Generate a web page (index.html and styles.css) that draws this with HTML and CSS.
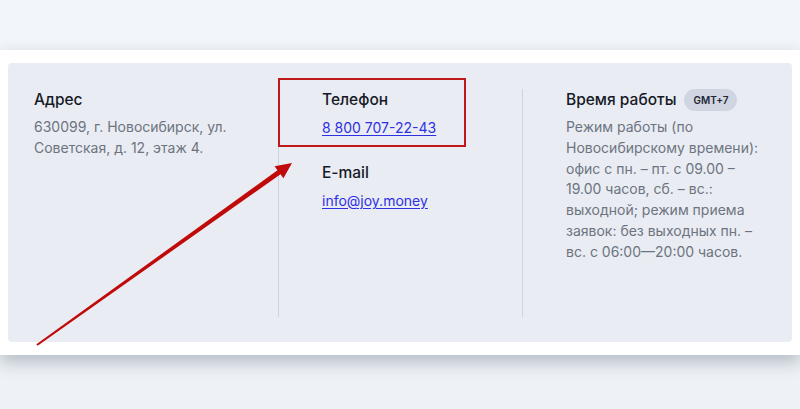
FILE: index.html
```html
<!DOCTYPE html>
<html lang="ru">
<head>
<meta charset="utf-8">
<link rel="stylesheet" href="styles.css">
</head>
<body>
<div class="page">
  <div class="top"></div>
  <section class="band">
    <div class="card">
      <div class="col col-first">
        <h3 class="title">Адрес</h3>
        <p class="text">630099, г. Новосибирск, ул. Советская, д. 12, этаж 4.</p>
      </div>
      <div class="col">
        <h3 class="title">Телефон</h3>
        <a class="link" href="#">8 800 707-22-43</a>
        <h3 class="title title-gap">E-mail</h3>
        <a class="link" href="#">info@joy.money</a>
      </div>
      <div class="col">
        <h3 class="title">Время работы <span class="badge">GMT+7</span></h3>
        <p class="text">Режим работы (по Новосибирскому времени): офис с пн. – пт. с 09.00 – 19.00 часов, сб. – вс.: выходной; режим приема заявок: без выходных пн. – вс. с 06:00—20:00 часов.</p>
      </div>
    </div>
  </section>
  <div class="highlight"></div>
  <svg class="arrow" width="800" height="409" viewBox="0 0 800 409">
    <polygon points="36.4,344.2 277.5,170.3 274.6,166.3 292,163 283.4,178.3 280.5,174.3 37.6,345.8" fill="#c00a0a"/>
  </svg>
</div>
</body>
</html>
```
FILE: styles.css
```css
* { box-sizing: border-box; }
html, body { margin: 0; padding: 0; }
body {
  background: #eef2f7;
  font-family: "Inter", "Noto Sans", sans-serif;
  width: 800px;
  height: 409px;
  overflow: hidden;
}
.page { position: relative; width: 800px; height: 409px; }
.top { height: 50px; background: #f2f5f9; }
.band {
  background: #ffffff;
  padding: 13px 8px 13px 8px;
  box-shadow: 0 7px 16px rgba(60, 70, 85, 0.32);
  position: relative;
}
.card {
  background: #e9ecf3;
  border-radius: 4px;
  padding: 26px 26px 25px 26px;
  display: grid;
  grid-template-columns: 244px 244px 244px;
}
.col {
  border-left: 1px solid #cdd4df;
  padding-left: 43px;
  min-height: 228px;
}
.col-first { border-left: none; padding-left: 0; padding-right: 44px; }
.title {
  margin: 0 0 6px 0;
  font-size: 15.5px;
  line-height: 22px;
  font-weight: 500;
  color: #161a26;
  display: flex;
  align-items: center;
}
.title-gap { margin-top: 23px; }
.text {
  margin: 0;
  font-size: 14px;
  line-height: 20.8px;
  color: #6d7480;
  max-width: 200px;
}
.link {
  display: block;
  font-size: 14px;
  line-height: 22px;
  color: #2f2fe6;
  text-decoration: underline;
  text-underline-offset: 2px;
}
.badge {
  display: inline-block;
  margin-left: 8px;
  background: #cfd6e1;
  color: #1f2533;
  font-size: 10px;
  font-weight: 600;
  line-height: 22px;
  padding: 0 9px;
  border-radius: 11px;
}
.highlight {
  position: absolute;
  left: 278px;
  top: 78px;
  width: 188px;
  height: 69px;
  border: 2px solid #c01818;
}
.arrow { position: absolute; left: 0; top: 0; pointer-events: none; }
```
